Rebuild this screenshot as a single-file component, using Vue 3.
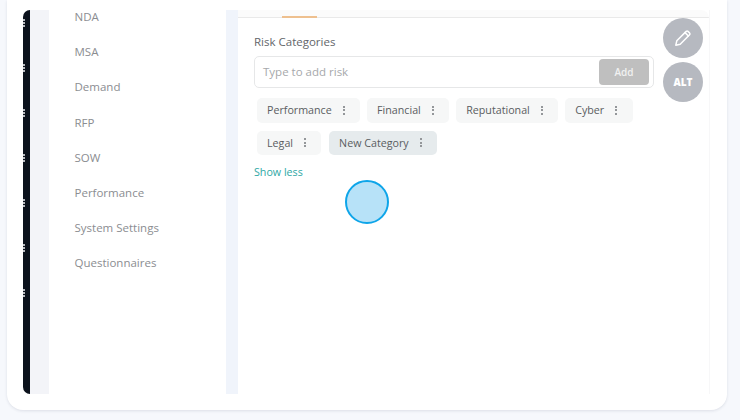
<script setup>
const navItems = ['NDA', 'MSA', 'Demand', 'RFP', 'SOW', 'Performance', 'System Settings', 'Questionnaires']
const categories = [
  { name: 'Performance' },
  { name: 'Financial' },
  { name: 'Reputational' },
  { name: 'Cyber' },
  { name: 'Legal' },
  { name: 'New Category', active: true }
]
const railMarks = 7
</script>

<template>
  <div class="page">
    <div class="card">
      <div class="shell">
        <div class="rail">
          <div v-for="n in railMarks" :key="n" class="rail-mark">
            <i></i><i></i><i></i>
          </div>
        </div>
        <div class="gutter"></div>
        <nav class="sidebar">
          <a v-for="item in navItems" :key="item" class="nav-item">{{ item }}</a>
        </nav>
        <div class="divider"></div>
        <main class="main">
          <div class="tabs"><span class="tab-active"></span></div>
          <section class="content">
            <label class="label">Risk Categories</label>
            <div class="input-row">
              <span class="placeholder">Type to add risk</span>
              <button class="add">Add</button>
            </div>
            <div class="chips">
              <div v-for="c in categories" :key="c.name" class="chip" :class="{ active: c.active }">
                <span>{{ c.name }}</span>
                <span class="kebab"><i></i><i></i><i></i></span>
              </div>
            </div>
            <a class="toggle">Show less</a>
          </section>
        </main>
      </div>
    </div>
    <button class="fab fab-edit" aria-label="Edit">
      <svg width="18" height="18" viewBox="0 0 18 18" fill="none" stroke="#fff" stroke-width="1.5" stroke-linejoin="round" stroke-linecap="round">
        <path d="M1.800 16.200l1-4.400L12.200 2.400a1.300 1.300 0 0 1 1.800 0l1.600 1.600a1.300 1.300 0 0 1 0 1.800L6.200 15.200z" />
        <path d="M11 3.600l3.400 3.400" />
      </svg>
    </button>
    <button class="fab fab-alt">ALT</button>
    <div class="pointer"></div>
  </div>
</template>

<style>
html, body {
  margin: 0;
  background: #f6f8fc;
}
</style>

<style scoped>
.page {
  position: relative;
  width: 740px;
  height: 420px;
  overflow: hidden;
  background: #f6f8fc;
  font-family: "Open Sans", "Noto Sans", sans-serif;
  font-size: 11.500px;
}
.card {
  box-sizing: border-box;
  width: 720px;
  height: 410px;
  margin-left: 7px;
  padding: 10px 16px 16px;
  background: #fff;
  border-radius: 0 0 16px 16px;
  box-shadow: 0 1px 3px rgba(40, 50, 80, 0.12);
}
.shell {
  display: flex;
  height: 384px;
}
.rail {
  flex: none;
  width: 7px;
  box-sizing: border-box;
  padding-top: 9px;
  background: #0b121c;
  border-radius: 8px 0 0 8px;
  display: flex;
  flex-direction: column;
  gap: 37px;
}
.rail-mark {
  display: flex;
  flex-direction: column;
  gap: 1px;
}
.rail-mark i {
  display: block;
  width: 2px;
  height: 2px;
  background: #b9bcc1;
}
.gutter {
  flex: none;
  width: 19px;
  background: #f3f4f8;
}
.sidebar {
  flex: none;
  width: 177px;
  box-sizing: border-box;
  padding-left: 25.500px;
  display: flex;
  flex-direction: column;
  color: #8b8d91;
  background: #fff;
}
.nav-item {
  display: block;
  height: 35.200px;
  line-height: 13px;
}
.divider {
  flex: none;
  width: 12px;
  background: #f0f4fb;
}
.main {
  flex: none;
  width: 472px;
  display: flex;
  flex-direction: column;
  border-right: 1px solid #f7f7f8;
  box-sizing: border-box;
}
.tabs {
  flex: none;
  height: 7px;
  background: #fbfbfb;
  border-bottom: 1px solid #e9e9e9;
  border-radius: 0 8px 0 0;
  padding-left: 44px;
  display: flex;
  align-items: flex-end;
}
.tab-active {
  width: 35px;
  height: 2px;
  margin-bottom: -1px;
  background: #eec08f;
}
.content {
  padding: 15px 0 0 16px;
  display: flex;
  flex-direction: column;
  align-items: flex-start;
}
.label {
  color: #63666a;
  line-height: 17px;
  margin-bottom: 6px;
}
.input-row {
  box-sizing: border-box;
  width: 400px;
  height: 32px;
  border: 1px solid #e6e7e8;
  border-radius: 5px;
  padding: 2px 4px 2px 8px;
  display: flex;
  align-items: center;
  justify-content: space-between;
}
.placeholder {
  color: #a6a8ab;
  line-height: 14px;
  margin-top: -1px;
}
.add {
  width: 50px;
  height: 26px;
  border: 0;
  padding: 0;
  border-radius: 4px;
  background: #bfbfbf;
  color: #f1f1f1;
  font: 600 10px "Open Sans", sans-serif;
}
.chips {
  display: flex;
  flex-wrap: wrap;
  gap: 8px 7px;
  width: 390px;
  margin: 10px 0 0 3px;
}
.chip {
  height: 24.500px;
  box-sizing: border-box;
  padding: 0 15.400px 0 10px;
  display: flex;
  align-items: center;
  gap: 11px;
  border-radius: 5px;
  background: #f6f7f7;
  color: #5a5d61;
  font-size: 10.700px;
}
.chip.active {
  background: #e6ebed;
  margin-left: 0.700px;
}
.kebab {
  display: flex;
  flex-direction: column;
  gap: 1.500px;
}
.kebab i {
  display: block;
  width: 2px;
  height: 2px;
  background: #94979a;
}
.toggle {
  margin-top: 10px;
  color: #2ea8a5;
  font-size: 10.700px;
  line-height: 15px;
}
.fab {
  position: absolute;
  left: 663px;
  width: 40px;
  height: 40px;
  border: 0;
  padding: 0;
  border-radius: 50%;
  background: #b6b9c0;
  color: #fff;
  display: flex;
  align-items: center;
  justify-content: center;
}
.fab-edit {
  top: 18px;
}
.fab-alt {
  top: 62px;
  font: 800 10px "Open Sans", sans-serif;
}
.pointer {
  position: absolute;
  left: 345px;
  top: 180px;
  box-sizing: border-box;
  width: 44px;
  height: 44px;
  border-radius: 50%;
  border: 2px solid #0ea5e9;
  background: #b7e2f8;
}
</style>
